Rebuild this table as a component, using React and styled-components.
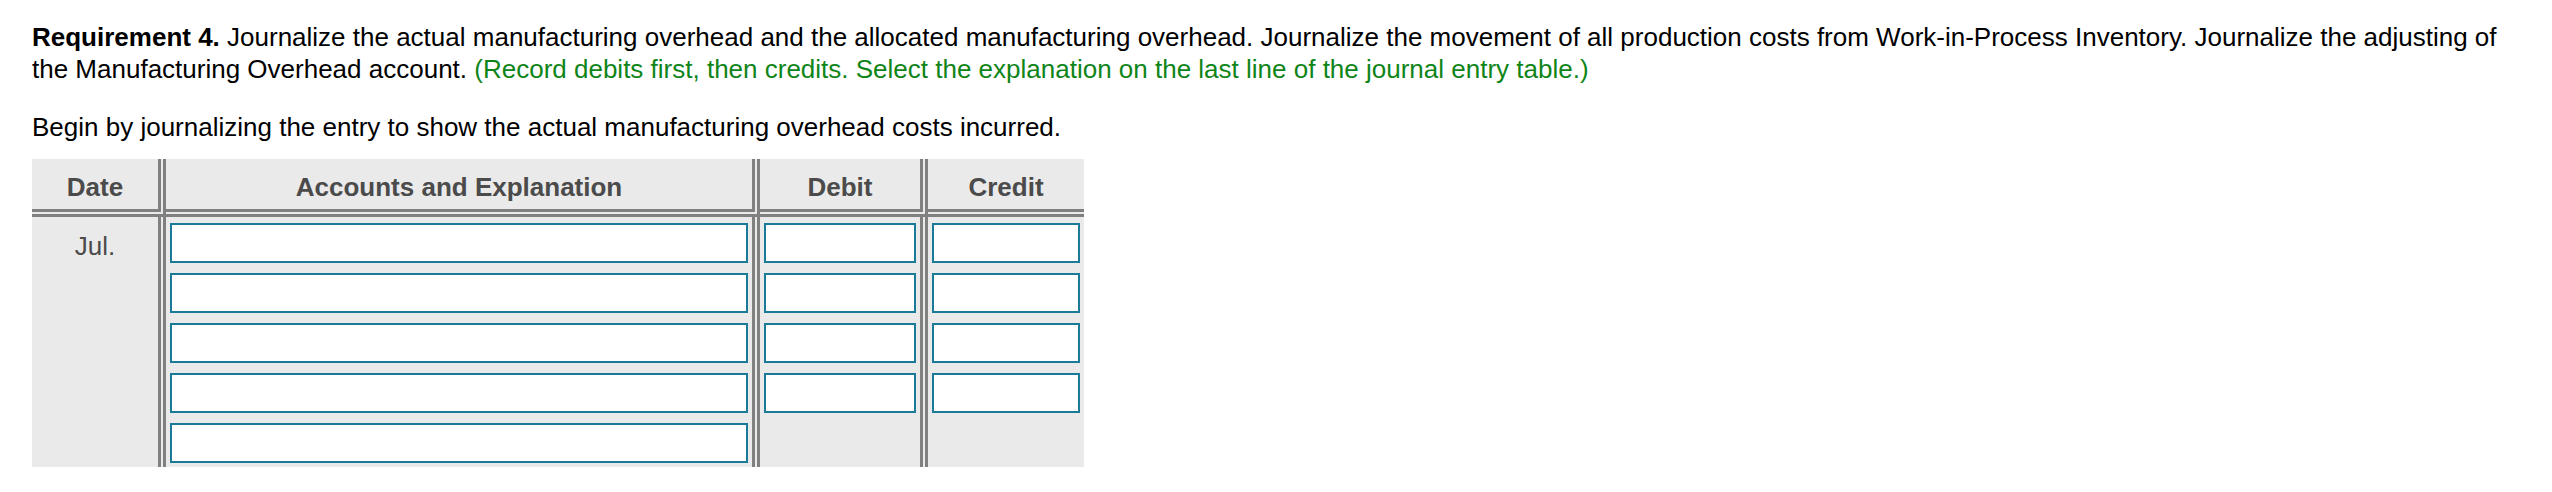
import React from 'react';
import styled, { createGlobalStyle } from 'styled-components';

const GlobalStyle = createGlobalStyle`
  body {
    margin: 0;
    background: #fff;
    font-family: "Liberation Sans", Arial, Helvetica, sans-serif;
  }
`

function JournalRow({ first, showAmounts }) {
  return (
    <tr>
      {first && (
        <DateCell rowSpan={5}>Jul.</DateCell>
      )}
      <BodyCell divider>
        <EntryInput type="text" />
      </BodyCell>
      <BodyCell divider>
        {showAmounts && <EntryInput type="text" />}
      </BodyCell>
      <BodyCell>
        {showAmounts && <EntryInput type="text" />}
      </BodyCell>
    </tr>
  )
}

function App() {
  // last line (explanation) has no debit / credit boxes
  const rows = [true, true, true, true, false];

  return (
    <Page>
      <GlobalStyle />
      <Prompt>
        <strong>Requirement 4.</strong> Journalize the actual manufacturing overhead and the allocated manufacturing overhead. Journalize the movement of all production costs from Work-in-Process Inventory. Journalize the adjusting of the Manufacturing Overhead account.{' '}
        <Hint>(Record debits first, then credits. Select the explanation on the last line of the journal entry table.)</Hint>
      </Prompt>
      <Lead>Begin by journalizing the entry to show the actual manufacturing overhead costs incurred.</Lead>
      <JournalTable>
        <colgroup>
          <col style={{ width: 134 }} />
          <col style={{ width: 594 }} />
          <col style={{ width: 168 }} />
          <col style={{ width: 156 }} />
        </colgroup>
        <thead>
          <tr>
            <HeadCell divider>Date</HeadCell>
            <HeadCell divider>Accounts and Explanation</HeadCell>
            <HeadCell divider>Debit</HeadCell>
            <HeadCell>Credit</HeadCell>
          </tr>
        </thead>
        <tbody>
          {rows.map((showAmounts, i) => (
            <JournalRow key={i} first={i === 0} showAmounts={showAmounts} />
          ))}
        </tbody>
      </JournalTable>
    </Page>
  )
}

export default App

const Page = styled.div`
  padding: 21px 32px 0 32px;
  color: #000;
`

const Prompt = styled.p`
  margin: 0 0 26px 0;
  font-size: 26px;
  line-height: 32px;
  strong {
    font-weight: bold;
  }
`

const Hint = styled.span`
  color: #0f8519;
`

const Lead = styled.p`
  margin: 0 0 16px 0;
  font-size: 26px;
  line-height: 32px;
`

const JournalTable = styled.table`
  border-collapse: separate;
  border-spacing: 0;
  table-layout: fixed;
  width: 1052px;
  background: #eaeaea;
`

const HeadCell = styled.th`
  height: 58px;
  padding: 6px 0 0 0;
  box-sizing: border-box;
  font-size: 26px;
  font-weight: bold;
  color: #4b4b4b;
  text-align: center;
  vertical-align: middle;
  border-bottom: 8px double #808080;
  border-right: ${(p) => (p.divider ? '8px double #808080' : 'none')};
`

const DateCell = styled.td`
  padding: 14px 0 0 0;
  font-size: 26px;
  line-height: 31px;
  color: #4b4b4b;
  text-align: center;
  vertical-align: top;
  border-right: 8px double #808080;
`

const BodyCell = styled.td`
  padding: 6px 4px 4px 4px;
  height: 50px;
  box-sizing: border-box;
  vertical-align: top;
  border-right: ${(p) => (p.divider ? '8px double #808080' : 'none')};
`

const EntryInput = styled.input`
  display: block;
  box-sizing: border-box;
  width: 100%;
  height: 40px;
  margin: 0;
  padding: 0 6px;
  background: #fff;
  border: 2px solid #1a7a98;
  border-radius: 0;
  outline: none;
  font-size: 22px;
  font-family: "Liberation Sans", Arial, sans-serif;
`
